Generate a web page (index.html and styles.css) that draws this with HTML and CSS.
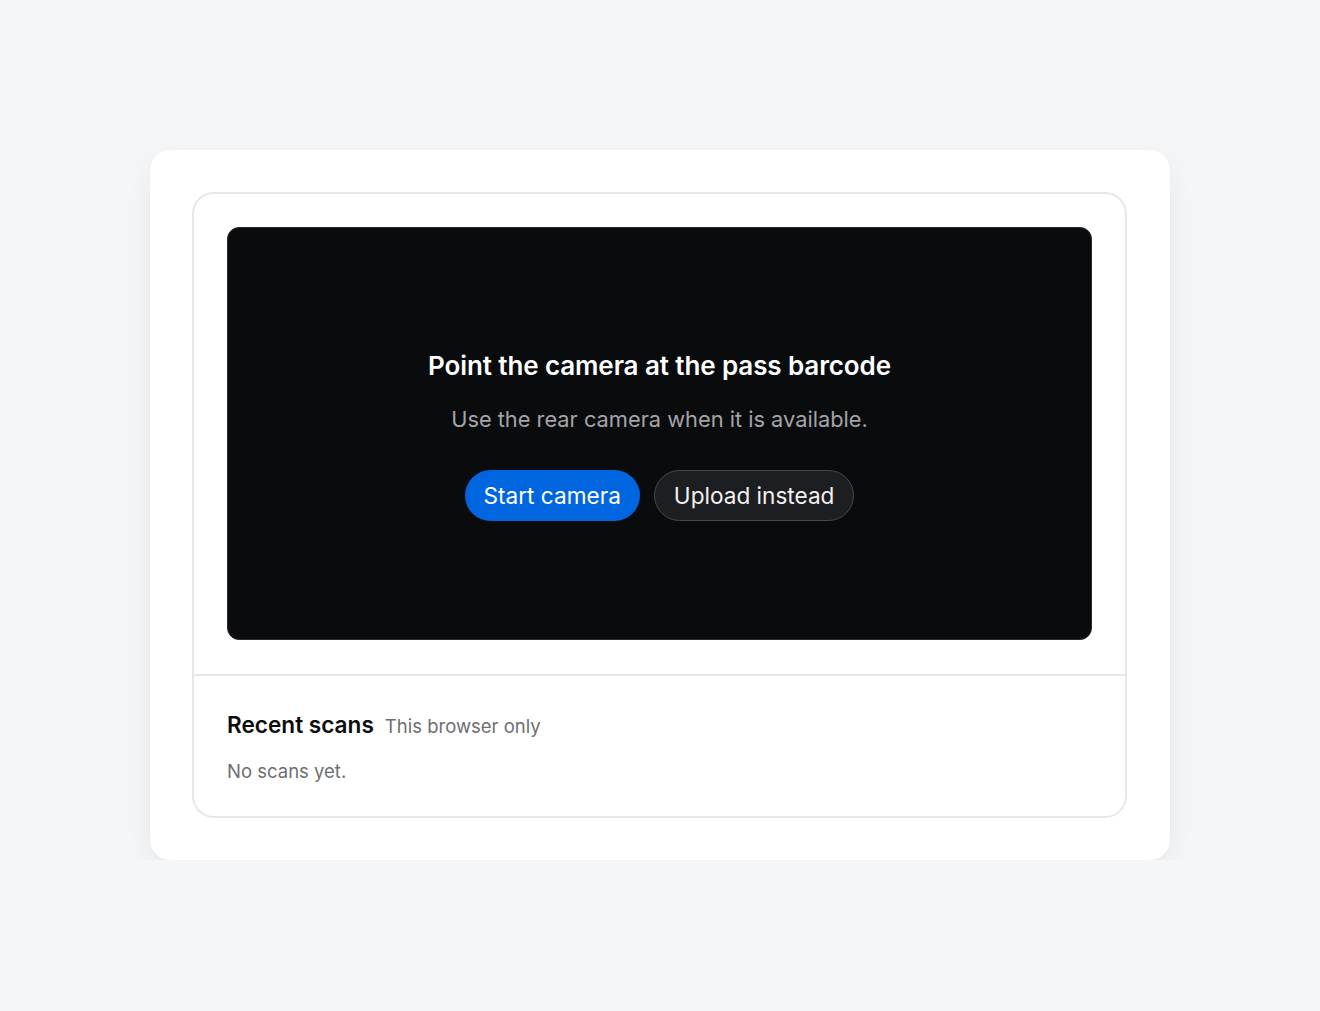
FILE: index.html
```html
<!DOCTYPE html>
<html lang="en">
<head>
  <meta charset="UTF-8" />
  <meta name="viewport" content="width=device-width, initial-scale=1.0" />
  <title>Scan pass</title>
  <link rel="stylesheet" href="styles.css">
</head>
<body>
  <main class="shell">
    <div class="scanner-card">
      <!-- Camera area -->
      <section class="viewport-wrap">
        <div class="viewport">
          <h1 class="viewport-title">Point the camera at the pass barcode</h1>
          <p class="viewport-hint">Use the rear camera when it is available.</p>
          <div class="actions">
            <button class="btn btn-primary" type="button">Start camera</button>
            <button class="btn btn-ghost" type="button">Upload instead</button>
          </div>
        </div>
      </section>

      <!-- History -->
      <section class="history">
        <div class="history-head">
          <h2>Recent scans</h2>
          <span class="history-note">This browser only</span>
        </div>
        <p class="history-empty">No scans yet.</p>
      </section>
    </div>
  </main>
</body>
</html>
```

FILE: styles.css
```css
* {
  box-sizing: border-box;
}

body {
  margin: 0;
  background: #f5f6f8;
  font-family: 'Inter', 'Noto Sans', sans-serif;
  color: #0b0c0e;
}

.shell {
  width: 1020px;
  margin: 150px auto 0;
  padding: 42px 43px 42px 42px;
  background: #fff;
  border-radius: 20px;
  box-shadow: 0 10px 30px rgba(20, 24, 32, 0.06), 0 1px 3px rgba(20, 24, 32, 0.04);
}

.scanner-card {
  border: 2px solid #e6e7ea;
  border-radius: 22px;
  overflow: hidden;
}

.viewport-wrap {
  padding: 33px 33px 34px;
  border-bottom: 2px solid #e6e7ea;
}

.viewport {
  height: 413px;
  background: #0a0b0d;
  border: 1px solid #2a2b2e;
  border-radius: 12px;
  display: flex;
  flex-direction: column;
  align-items: center;
  justify-content: center;
  padding-top: 3px;
}

.viewport-title {
  margin: 0;
  color: #fff;
  font-size: 26px;
  font-weight: 600;
  letter-spacing: -0.1px;
}

.viewport-hint {
  margin: 25px 0 0;
  color: #a3a4a8;
  font-size: 21.8px;
}

.actions {
  display: flex;
  gap: 14px;
  margin-top: 38px;
}

.btn {
  font-family: inherit;
  font-size: 22.6px;
  height: 51px;
  padding: 0 19px;
  border-radius: 26px;
  cursor: pointer;
}

.btn-primary {
  background: #0066e0;
  color: #fff;
  border: none;
}

.btn-ghost {
  background: #1d1e21;
  color: #f2f2f3;
  border: 1px solid #47484c;
}

.history {
  padding: 35px 33px 34px;
}

.history-head {
  display: flex;
  align-items: baseline;
  gap: 11px;
}

.history-head h2 {
  margin: 0;
  font-size: 22.6px;
  font-weight: 600;
  color: #0b0c0e;
}

.history-note {
  font-size: 18.5px;
  color: #6d6e72;
}

.history-empty {
  margin: 22px 0 0;
  font-size: 18.5px;
  color: #6d6e72;
}
```
